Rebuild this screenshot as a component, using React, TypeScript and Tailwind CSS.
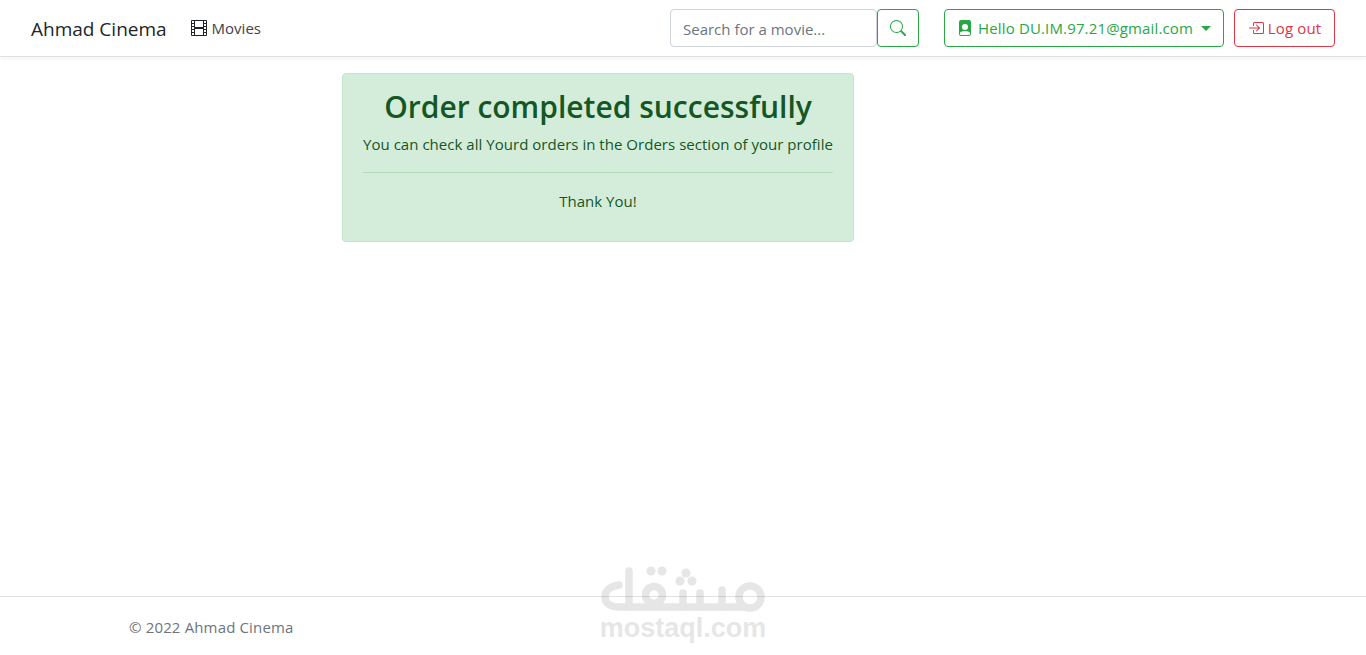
import { BsBoxArrowInRight, BsFilePersonFill, BsFilm, BsSearch } from 'react-icons/bs';

const Watermark = () => (
    <div className="pointer-events-none absolute left-[600px] top-[565px] flex w-[166px] flex-col items-center opacity-[0.095]">
        <svg width="166" height="50" viewBox="0 0 166 50" fill="none" stroke="#000" strokeLinecap="round" strokeLinejoin="round" strokeWidth="7.5">
            {/* logo */}
            <path d="M29 6V42" />
            <path d="M19 20C10 21 5 26 5 32C5 38 10 42 19 42H144" />
            <circle cx="54" cy="30" r="8.5" />
            <path d="M83 42V28M100 42V28M122 42V25" />
            <circle cx="150" cy="32" r="11" />
            <g fill="#000" stroke="none">
                <circle cx="51" cy="6" r="4.5" />
                <circle cx="62" cy="6" r="4.5" />
                <circle cx="80" cy="16" r="4.5" />
                <circle cx="92" cy="16" r="4.5" />
                <circle cx="86" cy="8" r="4.5" />
            </g>
        </svg>
        <span className="font-['Liberation_Sans',sans-serif] text-[27px] leading-[26px] font-bold text-black">
            mostaql.com
        </span>
    </div>
);

export default function App() {
    return (
        <div className="relative flex min-h-[655px] flex-col bg-white font-['Open_Sans',sans-serif] text-[15px] text-[#212529]">
            <nav className="flex h-[57px] items-center border-b border-[#dee2e6] px-[31px] shadow-[0_2px_4px_rgba(0,0,0,0.05)]">
                <span className="mr-[24px] pt-[2px] text-[19px] text-[#212529]">Ahmad Cinema</span>
                <a className="flex items-center gap-[5px] text-[#3f4347]">
                    <BsFilm size={16} className="text-[#212529]" />
                    Movies
                </a>
                <div className="ml-auto flex items-center">
                    <div className="flex h-[38px] w-[207px] items-center rounded border border-[#ced4da] px-[12px] pt-[2px] text-[#6c757d]">
                        Search for a movie...
                    </div>
                    <button className="flex h-[38px] w-[42px] items-center justify-center rounded border border-[#28a745] text-[#28a745]">
                        <BsSearch size={16} />
                    </button>
                    <button className="ml-[25px] flex h-[38px] w-[280px] items-center rounded border border-[#28a745] pl-[12px] text-[#28a745]">
                        <BsFilePersonFill size={16} className="mr-[5px] shrink-0" />
                        <span className="pt-[1px] tracking-[0.01em]">Hello DU.IM.97.21@gmail.com</span>
                        <span className="ml-[8px] h-0 w-0 border-x-[5px] border-t-[5px] border-x-transparent border-t-[#28a745]" />
                    </button>
                    <button className="ml-[10px] flex h-[38px] w-[101px] items-center justify-center gap-[4px] rounded border border-[#dc3545] text-[#dc3545]">
                        <BsBoxArrowInRight size={16} />
                        <span className="pt-[1px] tracking-[0.01em]">Log out</span>
                    </button>
                </div>
            </nav>

            <main className="flex-1 pt-[16px] pl-[342px]">
                <div className="flex h-[169px] w-[512px] flex-col items-center rounded border border-[#c3e6cb] bg-[#d4edda] px-[20px] pt-[12px] text-[#155724]">
                    <h4 className="text-[30px] leading-[42px] font-semibold">Order completed successfully</h4>
                    <p className="mt-[4px] leading-[24px] tracking-[0.03px]">You can check all Yourd orders in the Orders section of your profile</p>
                    <hr className="mt-[16px] w-full border-[#b1dfbb]" />
                    <p className="mt-[16px] leading-[24px]">Thank You!</p>
                </div>
            </main>

            <footer className="flex h-[59px] items-center border-t border-[#dee2e6] pt-[2px] pl-[129px] tracking-[0.01em] text-[#6c757d]">
                © 2022 Ahmad Cinema
            </footer>
            <Watermark />
        </div>
    );
}
